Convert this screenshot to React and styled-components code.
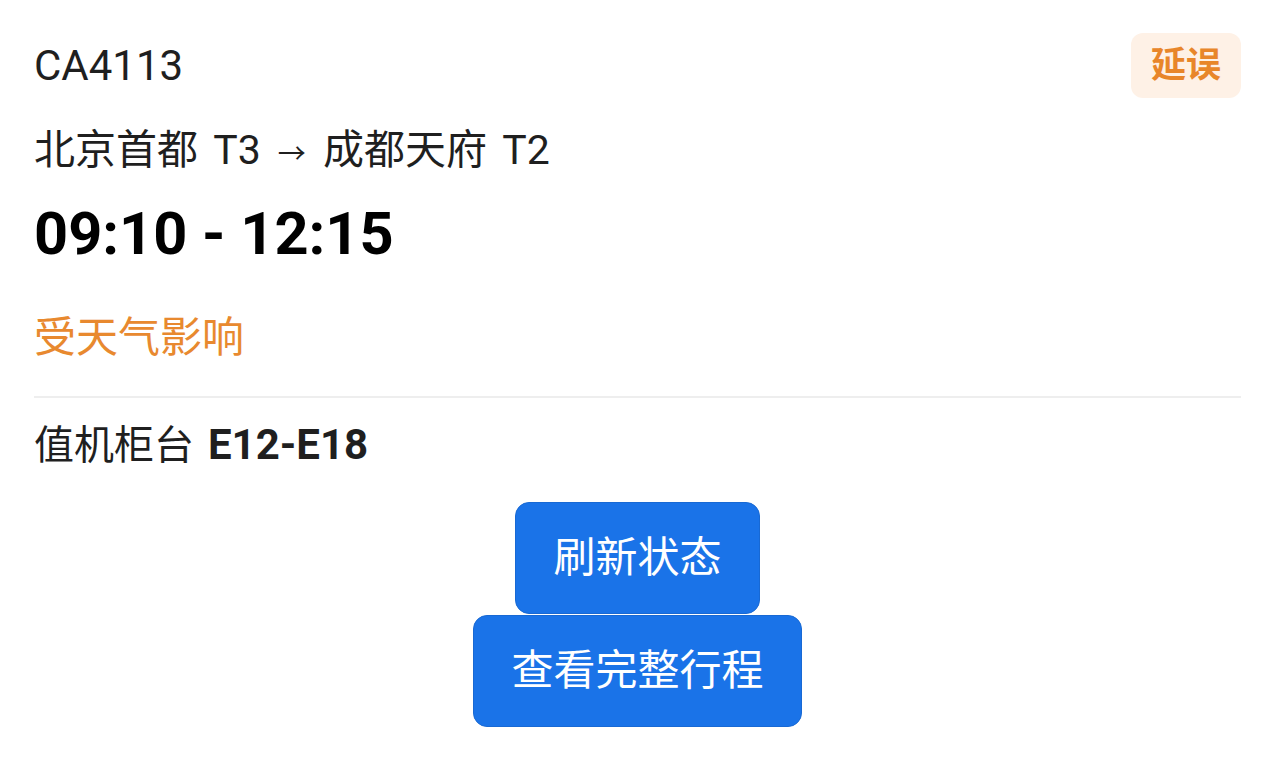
import styled, { createGlobalStyle } from "styled-components";

const GlobalStyle = createGlobalStyle`
    body {
        margin: 0;
        background: #ffffff;
        font-family: Roboto, "Noto Sans CJK SC", sans-serif;
        color: #1f1f1f;
    }
`

const Card = styled.div`
    padding: 33px 33px 30px 34px;
    display: flex;
    flex-direction: column;
`

const Header = styled.div`
    display: flex;
    justify-content: space-between;
    align-items: center;
`

const FlightNo = styled.div`
    font-size: 42px;
    line-height: 60px;
`

const Badge = styled.div`
    background: #fef1e6;
    color: #e8862a;
    font-weight: 700;
    font-size: 35px;
    line-height: 65px;
    padding: 0 20px;
    border-radius: 12px;
`

const Line = styled.div`
    font-size: ${(p) => p.size || 41}px;
    line-height: 60px;
    word-spacing: ${(p) => p.spacing || 0}px;
    margin-top: ${(p) => p.gap || 0}px;
    color: ${(p) => p.color || "#1f1f1f"};
`

const Arrow = styled.span`
    font-size: 28px;
    margin: 0 2px;
`

const Time = styled.div`
    font-size: 59.5px;
    font-weight: 700;
    line-height: 72px;
    margin-top: 13px;
    color: #000000;
`

const Divider = styled.hr`
    border: none;
    border-top: 2px solid #eeeeee;
    margin: 28px 0 17px;
`

const Strong = styled.b`
    font-weight: 700;
    font-size: 42px;
`

const Actions = styled.div`
    display: flex;
    flex-direction: column;
    align-items: center;
    gap: 1px;
    margin-top: 26px;
`

const Button = styled.button`
    background: #1a73e8;
    color: #ffffff;
    border: 1px solid #1869d4;
    border-radius: 14px;
    font-family: Roboto, "Noto Sans CJK SC", sans-serif;
    font-size: 42px;
    line-height: 60px;
    padding: 25px 37px;
    cursor: pointer;
`

const App = () => {
    return (
        <Card>
            <GlobalStyle />
            <Header>
                <FlightNo>CA4113</FlightNo>
                <Badge>延误</Badge>
            </Header>
            <Line gap={22} spacing={5}>
                北京首都 T3 <Arrow>→</Arrow> 成都天府 T2
            </Line>
            <Time>09:10 - 12:15</Time>
            <Line gap={38} size={42} color="#e8892f">受天气影响</Line>
            <Divider />
            <Line size={40} spacing={4}>
                值机柜台 <Strong>E12-E18</Strong>
            </Line>
            <Actions>
                <Button>刷新状态</Button>
                <Button>查看完整行程</Button>
            </Actions>
        </Card>
    );
}

export default App;
